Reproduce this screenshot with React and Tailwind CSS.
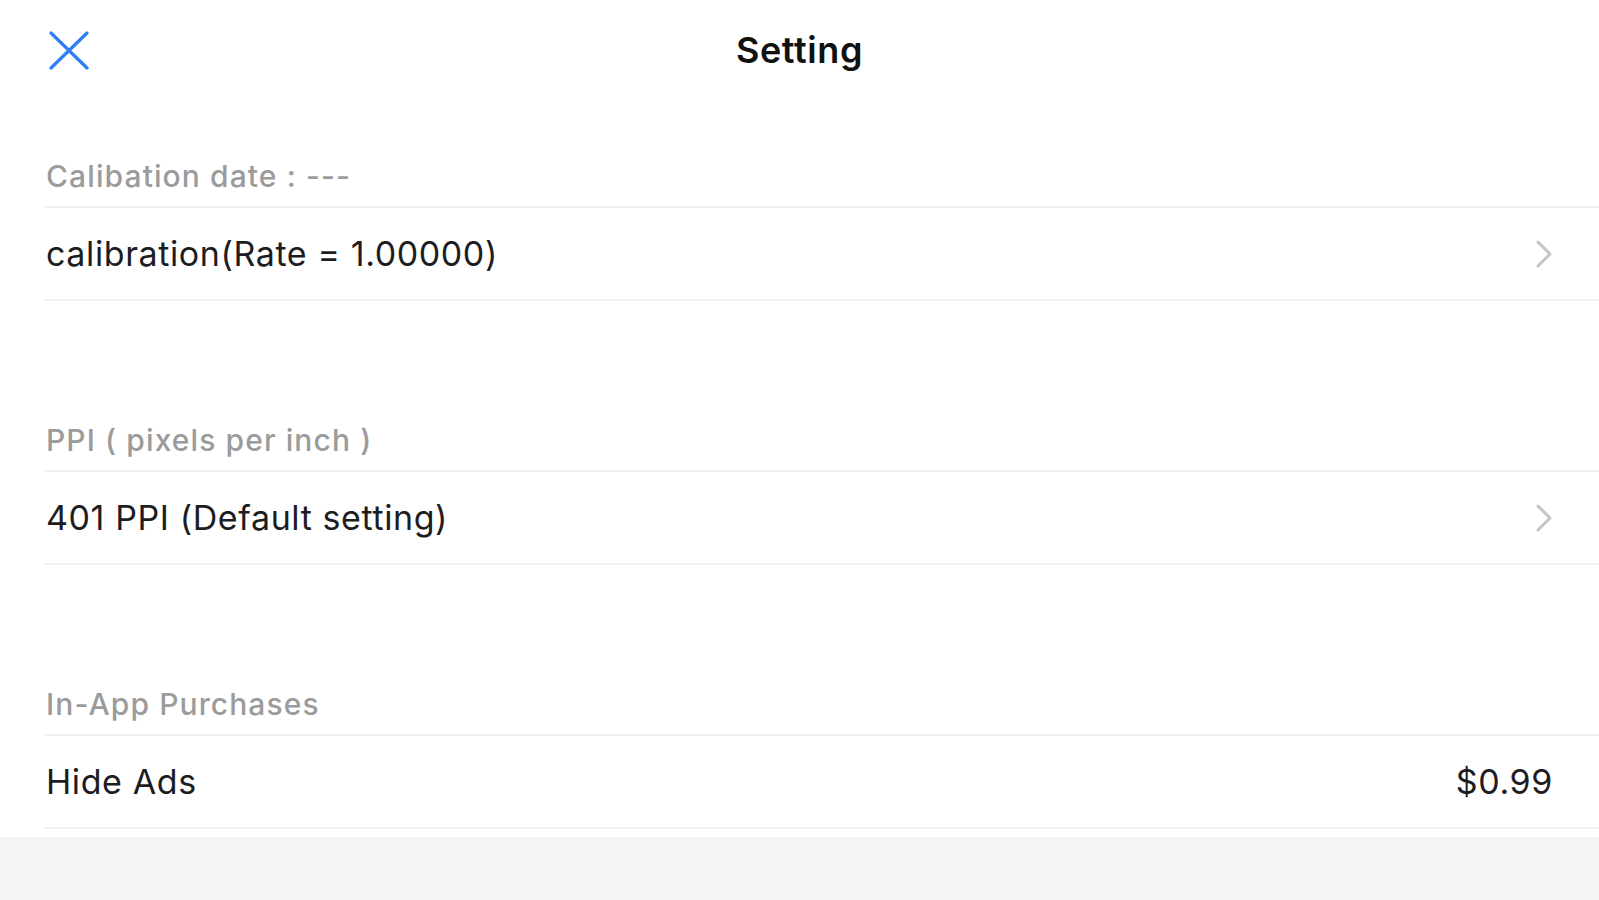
import React from 'react';

// Settings screen: grouped list with section headers
const sections = [
  { title: 'Calibation date : ---', label: 'calibration(Rate = 1.00000)', chevron: true },
  { title: 'PPI ( pixels per inch )', label: '401 PPI (Default setting)', chevron: true },
  { title: 'In-App Purchases', label: 'Hide Ads', value: '$0.99' },
];

function CloseIcon() {
  return (
    <svg width="40" height="40" viewBox="0 0 40 40" fill="none">
      <path d="M2 2L38 37M38 2L2 37" stroke="#2f7ef5" strokeWidth="3.2" strokeLinecap="round" />
    </svg>
  );
}

function Chevron() {
  return (
    <svg width="18" height="28" viewBox="0 0 18 28" fill="none">
      <path d="M3 2L15 14L3 26" stroke="#c4c4c8" strokeWidth="3" strokeLinecap="round" strokeLinejoin="round" />
    </svg>
  );
}

function Section({ title, label, chevron, value, first }) {
  return (
    <div className={first ? 'mt-[46px]' : 'mt-[109px]'}>
      <div className="h-[60px] pl-[46px] flex items-center text-[30px] tracking-[1.1px] text-[#9b9b9b] font-medium">
        {title}
      </div>
      <div className="ml-[45px] h-[2px] bg-[#f0f0f0]" />
      <div className="h-[91px] pl-[46px] pr-[46px] flex items-center justify-between text-[34px] tracking-[0.6px] text-[#1d1d1f]">
        <span>{label}</span>
        {chevron && <Chevron />}
        {value && <span>{value}</span>}
      </div>
      <div className="ml-[45px] h-[2px] bg-[#f0f0f0]" />
    </div>
  );
}

export default function App() {
  return (
    <div className="w-[1599px] h-[900px] flex flex-col bg-white overflow-hidden" style={{ fontFamily: 'Inter, "Noto Sans", sans-serif' }}>
      <div className="relative h-[100px] flex items-center justify-center shrink-0">
        <div className="absolute left-[49px] top-[31px]">
          <CloseIcon />
        </div>
        <h1 className="text-[36px] tracking-[0.6px] font-semibold text-[#111]">Setting</h1>
      </div>
      <div className="flex flex-col">
        {sections.map((s, i) => (
          <Section key={s.title} {...s} first={i === 0} />
        ))}
      </div>
      <div className="mt-[8px] grow bg-[#f4f4f4]" />
    </div>
  );
}
